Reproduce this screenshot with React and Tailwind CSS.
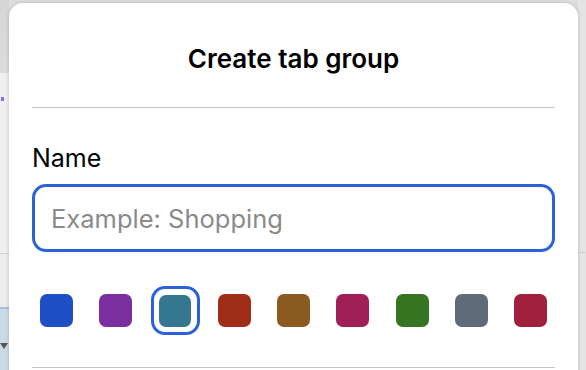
const swatches = [
  "#1f4fc5",
  "#7a2ea0",
  "#357690",
  "#9f2d18",
  "#8b5a1e",
  "#9f1f56",
  "#357521",
  "#5f6b78",
  "#a01f3c",
];

function Backdrop() {
  return (
    <div className="flex h-full w-full">
      <div className="flex w-[9px] flex-col">
        <div className="h-[73px] bg-gradient-to-b from-[#d6d6d6] to-[#dcdcdc]" />
        <div className="h-[180px] bg-[#efeff1] pt-[24px]">
          <div className="ml-[1px] h-[4px] w-[3px] bg-[#8a6cf0]" />
        </div>
        <div className="h-[54px] border-t border-[#cfcfcf] bg-[#ececec]" />
        <div className="flex-1 border-t-2 border-[#a9c1da] bg-[#cbdbe6] pt-[34px]">
          <div className="h-0 w-0 border-x-[4px] border-t-[6px] border-x-transparent border-t-[#555]" />
        </div>
      </div>
      <div className="flex-1" />
      <div className="flex w-[8px] flex-col bg-[#e4e4e4]">
        <div className="h-[253px] border-b border-[#cfcfcf]" />
      </div>
    </div>
  );
}

export default function App() {
  return (
    <div
      className="relative h-[370px] w-[586px] overflow-hidden bg-[#dedede]"
      style={{ fontFamily: "Inter, 'Noto Sans', sans-serif" }}
    >
      <Backdrop />
      <div className="absolute left-[9px] top-[3px] h-[380px] w-[569px] rounded-t-[14px] bg-white px-[23px] shadow-[0_0_4px_rgba(0,0,0,0.18)]">
        <h2 className="pt-[40px] pb-[32px] text-center text-[26px] font-semibold leading-[32px] text-black">
          Create tab group
        </h2>
        <div className="h-px bg-[#c4c4c4]" />
        <label className="mt-[34px] block text-[25px] leading-[32px] text-black">
          Name
        </label>
        <input
          type="text"
          placeholder="Example: Shopping"
          className="mt-[10px] h-[68px] w-full rounded-[14px] border-[3px] border-[#2b62d8] px-[16px] text-[25.5px] text-black outline-none placeholder:text-[#8a8a8a]"
        />
        <div className="mt-[34px] flex justify-between">
          {swatches.map((c, i) => (
            <div
              key={c}
              className={
                i === 2
                  ? "flex h-[49px] w-[49px] items-center justify-center rounded-[14px] border-[3.5px] border-[#2b62d8]"
                  : "flex h-[49px] w-[49px] items-center justify-center"
              }
            >
              <div
                className={i === 2 ? "h-[32px] w-[32px] rounded-[7px]" : "h-[33px] w-[33px] rounded-[7px]"}
                style={{ backgroundColor: c }}
              />
            </div>
          ))}
        </div>
        <div className="mt-[32px] h-px bg-[#c4c4c4]" />
      </div>
    </div>
  );
}
